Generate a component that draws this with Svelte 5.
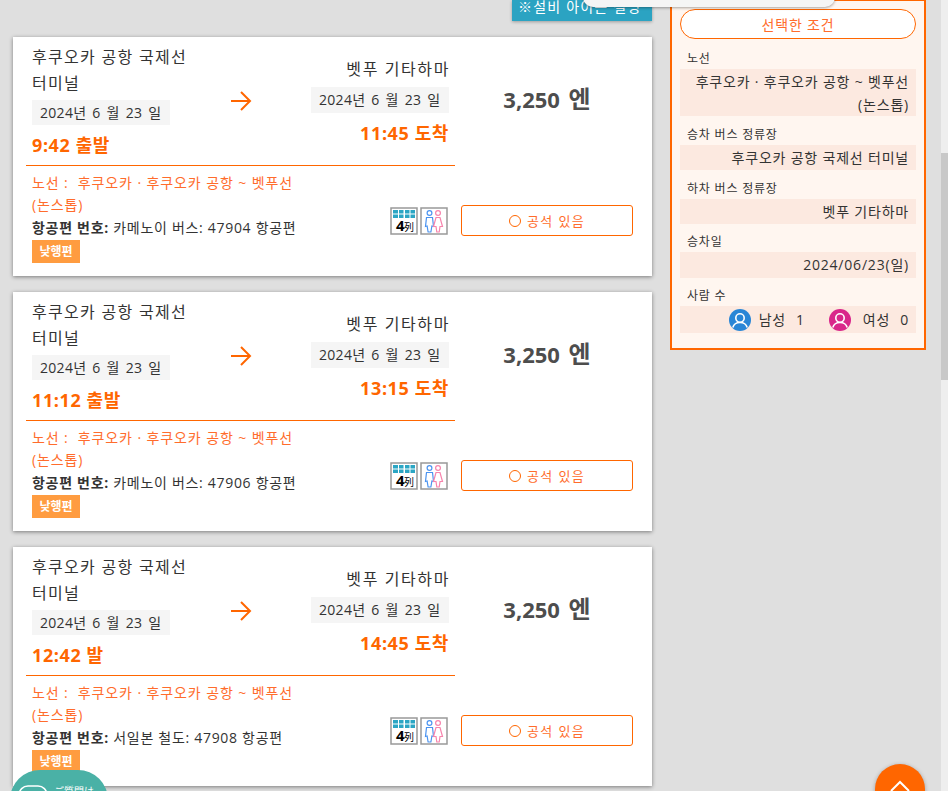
<script>
	const trips = [
		{ depTime: '9:42 출발', arrTime: '11:45 도착', flight: '카메노이 버스: 47904 항공편' },
		{ depTime: '11:12 출발', arrTime: '13:15 도착', flight: '카메노이 버스: 47906 항공편' },
		{ depTime: '12:42 발', arrTime: '14:45 도착', flight: '서일본 철도: 47908 항공편' }
	];
</script>

<div class="page">
	<main class="results">
		<div class="note-row">
			<div class="note"><span>※설비 아이콘 설명</span></div>
		</div>

		{#each trips as trip}
			<section class="card">
				<div class="top">
					<div class="stop dep">
						<p class="name">후쿠오카 공항 국제선 터미널</p>
						<p class="date">2024년 6 월 23 일</p>
						<p class="time">{trip.depTime}</p>
					</div>
					<svg class="arrow" width="22" height="22" viewBox="0 0 22 22">
						<path d="M1 11H20M11 2l9 9-9 9" fill="none" stroke="#ff6600" stroke-width="2" />
					</svg>
					<div class="stop arr">
						<p class="name">벳푸 기타하마</p>
						<p class="date">2024년 6 월 23 일</p>
						<p class="time">{trip.arrTime}</p>
					</div>
					<div class="price">3,250 <span>엔</span></div>
				</div>
				<div class="rule"></div>
				<div class="bottom">
					<div class="info">
						<p class="route">노선 :&nbsp; 후쿠오카 · 후쿠오카 공항 ~ 벳푸선<br />(논스톱)</p>
						<p class="flight"><b>항공편 번호:</b> {trip.flight}</p>
						<span class="tag">낮행편</span>
					</div>
					<div class="icons">
						<svg width="28" height="28" viewBox="0 0 28 28">
							<rect x="1" y="1" width="26" height="26" fill="#fff" stroke="#999" stroke-width="1.500" />
							<g fill="#2ba6c4">
								<rect x="3" y="3" width="5" height="3.500" />
								<rect x="9" y="3" width="4.500" height="3.500" />
								<rect x="15" y="3" width="4.500" height="3.500" />
								<rect x="20.500" y="3" width="4.500" height="3.500" />
								<rect x="3" y="7.500" width="5" height="3.500" />
								<rect x="9" y="7.500" width="4.500" height="3.500" />
								<rect x="15" y="7.500" width="4.500" height="3.500" />
								<rect x="20.500" y="7.500" width="4.500" height="3.500" />
							</g>
							<text x="6" y="24" class="seat-num">4</text>
							<text x="14" y="24" class="seat-unit">列</text>
						</svg>
						<svg width="28" height="28" viewBox="0 0 28 28">
							<rect x="1" y="1" width="26" height="26" fill="#fff" stroke="#999" stroke-width="1.500" />
							<g fill="none" stroke="#4b93f0" stroke-width="1.200">
								<circle cx="9.500" cy="6" r="2.400" />
								<path d="M6.500 10.500h6l1 9-1.600-.5-1 6h-2.800l-1-6-1.600.5z" />
							</g>
							<g fill="none" stroke="#f783ac" stroke-width="1.200">
								<circle cx="18" cy="6" r="2.400" />
								<path d="M16 10.500h4l2.500 9H20l-.8 5.500h-2.400L16 19.500h-2.500z" />
							</g>
						</svg>
					</div>
					<button class="seats"><i></i>공석 있음</button>
				</div>
			</section>
		{/each}
	</main>

	<aside class="side">
		<h2>선택한 조건</h2>
		<h3>노선</h3>
		<p class="val first">후쿠오카 · 후쿠오카 공항 ~ 벳푸선<br />(논스톱)</p>
		<h3>승차 버스 정류장</h3>
		<p class="val">후쿠오카 공항 국제선 터미널</p>
		<h3>하차 버스 정류장</h3>
		<p class="val">벳푸 기타하마</p>
		<h3>승차일</h3>
		<p class="val tall">2024/06/23(일)</p>
		<h3>사람 수</h3>
		<div class="val people">
			<svg width="22" height="22" viewBox="0 0 22 22">
				<circle cx="11" cy="11" r="11" fill="#2a86d6" />
				<circle cx="11" cy="9" r="4.200" fill="none" stroke="#fff" stroke-width="1.600" />
				<path d="M3.800 18.500c1-3.500 3.500-5 7.200-5s6.200 1.500 7.200 5" fill="none" stroke="#fff" stroke-width="1.600" />
			</svg>
			<span class="who">남성</span><span class="num">1</span>
			<svg class="second" width="22" height="22" viewBox="0 0 22 22">
				<circle cx="11" cy="11" r="11" fill="#d9278a" />
				<circle cx="11" cy="9" r="4.200" fill="none" stroke="#fff" stroke-width="1.600" />
				<path d="M3.800 18.500c1-3.500 3.500-5 7.200-5s6.200 1.500 7.200 5" fill="none" stroke="#fff" stroke-width="1.600" />
			</svg>
			<span class="who she">여성</span><span class="num">0</span>
		</div>
	</aside>

	<div class="popup"></div>
	<div class="chat">
		<svg width="32" height="24" viewBox="0 0 32 24">
			<rect x="1" y="1" width="28" height="22" rx="9" fill="none" stroke="#fff" stroke-width="1.500" />
		</svg>
		<span>ご質問は</span>
	</div>
	<div class="to-top">
		<svg width="28" height="16" viewBox="0 0 28 16">
			<path d="M5 15L14 6l9 9" fill="none" stroke="#fff" stroke-width="2" />
		</svg>
	</div>
	<div class="scrollbar"><div class="thumb"></div></div>
</div>

<style>
	:global(body) {
		margin: 0;
		background: #dfdfdf;
	}

	.page {
		position: relative;
		display: flex;
		align-items: flex-start;
		width: 948px;
		height: 791px;
		overflow: hidden;
		background: #dfdfdf;
		color: #333;
		font-family: "Open Sans", "Noto Sans CJK KR", sans-serif;
	}

	p,
	h2,
	h3 {
		margin: 0;
		font-weight: normal;
	}

	.results {
		display: flex;
		flex-direction: column;
		gap: 16px;
		width: 639px;
		margin-left: 13px;
		flex: none;
	}

	.note-row {
		display: flex;
		justify-content: flex-end;
		height: 21px;
	}

	.note {
		width: 140px;
		height: 21px;
		overflow: hidden;
		background: #2ba3c2;
		color: #fff;
		font-size: 14px;
		letter-spacing: 1.2px;
		box-shadow: 0 1px 3px rgba(0, 0, 0, 0.3);
	}

	.note span {
		display: block;
		margin-top: -5px;
		padding-left: 6px;
		line-height: 24px;
		white-space: nowrap;
	}

	.card {
		height: 239px;
		box-sizing: border-box;
		background: #fff;
		box-shadow: 0 1px 4px rgba(0, 0, 0, 0.45);
		padding: 7px 0 0 13px;
	}

	.top {
		display: grid;
		grid-template-columns: 170px 109px 138px 1fr;
		height: 121px;
		margin-left: 6px;
		align-items: center;
	}

	.stop {
		align-self: start;
	}

	.name {
		font-size: 16px;
		line-height: 26px;
		letter-spacing: 1.3px;
	}

	.dep .name {
		width: 165px;
	}

	.date {
		display: inline-block;
		margin-top: 4px;
		width: 138px;
		box-sizing: border-box;
		padding-left: 8px;
		background: #f5f5f5;
		font-size: 14px;
		line-height: 25px;
		letter-spacing: 0.3px;
		word-spacing: 2px;
		white-space: nowrap;
	}

	.time {
		margin-top: 6px;
		color: #ff6600;
		font-size: 18px;
		font-weight: bold;
		line-height: 28px;
		letter-spacing: 0.6px;
	}

	.arr {
		margin-top: 12px;
		text-align: right;
	}

	.arr .name {
		letter-spacing: 1.6px;
		margin-right: -1px;
	}

	.arr .date {
		margin-top: 5px;
		line-height: 26px;
		text-align: left;
	}

	.arr .time {
		margin-top: 6px;
	}

	.arrow {
		justify-self: center;
		margin: 0 0 8px 0;
		transform: translateX(-16px);
	}

	.price {
		justify-self: center;
		margin: 0 0 12px -7px;
		color: #4d4d4d;
		font-size: 22px;
		font-weight: 700;
		line-height: 32px;
		white-space: nowrap;
		word-spacing: 3px;
	}

	.price span {
		font-size: 24px;
		font-weight: 600;
	}

	.rule {
		width: 429px;
		margin-top: 0;
		border-top: 1px solid #ff6600;
	}

	.bottom {
		display: flex;
		align-items: flex-start;
		margin-left: 6px;
	}

	.info {
		width: 358px;
		flex: none;
		padding-top: 6px;
	}

	.route {
		color: #ff6c2c;
		font-size: 14px;
		line-height: 22px;
		letter-spacing: 0.9px;
	}

	.flight {
		font-size: 14px;
		line-height: 23px;
		letter-spacing: 0.7px;
		white-space: nowrap;
	}

	.tag {
		display: inline-block;
		width: 48px;
		height: 23px;
		margin-top: -1px;
		background: #ff9c40;
		color: #fff;
		font-size: 12px;
		font-weight: bold;
		line-height: 23px;
		text-align: center;
	}

	.icons {
		display: flex;
		gap: 2px;
		margin-top: 41px;
		margin-left: 0;
	}

	.seat-num {
		font-size: 15px;
		font-weight: bold;
		fill: #000;
	}

	.seat-unit {
		font-size: 10px;
		fill: #000;
	}

	.seats {
		display: flex;
		align-items: center;
		justify-content: center;
		gap: 6px;
		width: 172px;
		height: 31px;
		margin: 39px 0 0 13px;
		padding: 0;
		background: #fff;
		border: 1px solid #ff6600;
		border-radius: 3px;
		color: #ff6c2c;
		font-family: inherit;
		font-size: 13px;
		letter-spacing: 1.4px;
	}

	.seats i {
		width: 10px;
		height: 10px;
		border: 1.500px solid #ff6600;
		border-radius: 50%;
	}

	.side {
		flex: none;
		width: 256px;
		height: 351px;
		box-sizing: border-box;
		margin: -1px 0 0 18px;
		padding: 8px 8px 0;
		border: 2px solid #ff6600;
		background: #fff6f0;
	}

	.side h2 {
		height: 30px;
		box-sizing: border-box;
		background: #fff;
		border: 1px solid #ff6600;
		border-radius: 15px;
		color: #ff6c2c;
		font-size: 14px;
		line-height: 29px;
		letter-spacing: 0.8px;
		text-align: center;
	}

	.side h3 {
		padding: 0 0 2px 7px;
		margin-top: 10px;
		font-size: 12px;
		line-height: 17px;
		letter-spacing: 0.8px;
	}

	.side h2 + h3 {
		margin-top: 11px;
	}

	.side h3:nth-of-type(n + 4) {
		margin-top: 9px;
	}

	.val {
		padding: 1px 7px 1px 0;
		background: #fce9e0;
		font-size: 14px;
		line-height: 23px;
		text-align: right;
		letter-spacing: 0.8px;
	}

	.first {
		padding-bottom: 0;
	}

	.tall {
		padding-bottom: 2px;
	}

	.people {
		display: flex;
		align-items: center;
		justify-content: flex-end;
		height: 27px;
		box-sizing: border-box;
	}

	.who {
		margin-left: 8px;
	}

	.num {
		margin-left: 10px;
	}

	.second {
		margin-left: 24px;
	}

	.she {
		margin-left: 12px;
	}

	.popup {
		position: absolute;
		left: 583px;
		top: -20px;
		width: 252px;
		height: 27px;
		background: #f5f5f5;
		border-radius: 0 0 10px 10px;
		box-shadow: 0 1px 3px rgba(0, 0, 0, 0.35);
	}

	.chat {
		position: absolute;
		left: 10px;
		top: 770px;
		display: flex;
		align-items: flex-start;
		gap: 4px;
		width: 98px;
		height: 60px;
		box-sizing: border-box;
		padding: 15px 0 0 8px;
		background: #4ab1a6;
		border-radius: 30px;
		color: #fff;
		font-size: 10px;
		line-height: 12px;
		white-space: nowrap;
	}

	.to-top {
		position: absolute;
		left: 875px;
		top: 764px;
		display: flex;
		justify-content: center;
		align-items: flex-start;
		width: 50px;
		height: 50px;
		padding-top: 12px;
		box-sizing: border-box;
		background: #ff6600;
		border-radius: 50%;
		box-shadow: 0 1px 4px rgba(0, 0, 0, 0.3);
	}

	.scrollbar {
		position: absolute;
		right: 0;
		top: 0;
		width: 7px;
		height: 791px;
		background: #eeeeee;
	}

	.thumb {
		width: 7px;
		height: 227px;
		margin-top: 153px;
		background: #c8c8c8;
	}
</style>
